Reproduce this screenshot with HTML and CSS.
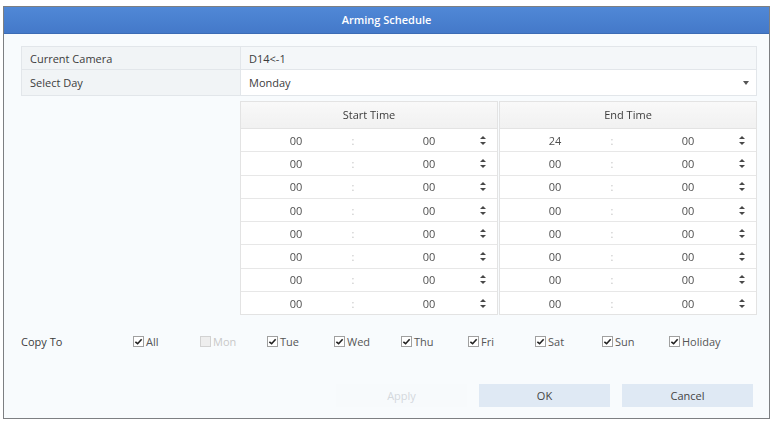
FILE: index.html
```html
<!DOCTYPE html>
<html lang="en">
<head>
  <meta charset="UTF-8">
  <title>Arming Schedule</title>
  <link rel="stylesheet" href="styles.css">
</head>
<body>
  <div class="dialog">
    <div class="dialog-title">Arming Schedule</div>

    <div class="dialog-body">
      <table class="info">
        <tr class="info-row">
          <td class="info-label">Current Camera</td>
          <td class="info-value">D14&lt;-1</td>
        </tr>
        <tr class="info-row select-row">
          <td class="info-label">Select Day</td>
          <td class="info-value">
            <div class="select">
              <span>Monday</span>
              <span class="caret"></span>
            </div>
          </td>
        </tr>
      </table>

      <div class="times">
        <div class="time-col" id="startCol">
          <div class="time-head">Start Time</div>
        </div>
        <div class="time-col" id="endCol">
          <div class="time-head">End Time</div>
        </div>
      </div>

      <div class="copy">
        <span class="copy-label">Copy To</span>
        <div class="copy-days" id="copyDays"></div>
      </div>

      <div class="actions">
        <button class="btn" disabled>Apply</button>
        <button class="btn">OK</button>
        <button class="btn">Cancel</button>
      </div>
    </div>
  </div>

  <script>
    // eight periods per day, only the first one ends at 24:00
    var periods = [
      ['00', '00', '24', '00'],
      ['00', '00', '00', '00'],
      ['00', '00', '00', '00'],
      ['00', '00', '00', '00'],
      ['00', '00', '00', '00'],
      ['00', '00', '00', '00'],
      ['00', '00', '00', '00'],
      ['00', '00', '00', '00']
    ];

    function timeRow(h, m) {
      return '<div class="time-row">' +
        '<span class="hour">' + h + '</span>' +
        '<span class="sep">:</span>' +
        '<span class="minute">' + m + '</span>' +
        '<span class="spin"><i class="up"></i><i class="down"></i></span>' +
        '</div>';
    }

    var startCol = document.getElementById('startCol');
    var endCol = document.getElementById('endCol');
    periods.forEach(function (p) {
      startCol.insertAdjacentHTML('beforeend', timeRow(p[0], p[1]));
      endCol.insertAdjacentHTML('beforeend', timeRow(p[2], p[3]));
    });

    // copy-to checkboxes, Mon is the current day so it is disabled
    var days = ['All', 'Mon', 'Tue', 'Wed', 'Thu', 'Fri', 'Sat', 'Sun', 'Holiday'];
    var copyDays = document.getElementById('copyDays');
    days.forEach(function (d) {
      var off = d === 'Mon';
      copyDays.insertAdjacentHTML('beforeend',
        '<label class="day' + (off ? ' disabled' : '') + '">' +
        '<span class="box">' + (off ? '' : '<svg viewBox="0 0 10 10" width="9" height="9"><path d="M1.5 5.5 L4 7.5 L8.5 2.5" fill="none" stroke="#222" stroke-width="1.8"/></svg>') + '</span>' +
        d + '</label>');
    });
  </script>
</body>
</html>
```

FILE: styles.css
```css
body {
  margin: 0;
  background: #ffffff;
  font-family: "Open Sans", "Noto Sans", sans-serif;
  font-size: 11px;
  color: #3c3c3c;
}

.dialog {
  margin: 6px 3px 0 3px;
  height: 411px;
  border: 1px solid #7d7f82;
  background: #f8fbfd;
  display: flex;
  flex-direction: column;
}

.dialog-title {
  height: 26px;
  line-height: 25px;
  text-align: center;
  color: #ffffff;
  font-weight: 600;
  background: linear-gradient(#5088d6, #4479c9);
  border-bottom: 1px solid #3c6cb5;
}

.dialog-body {
  padding: 12px 12px 0 17px;
}

/* camera / day table */
.info {
  width: 100%;
  border-collapse: collapse;
  border: 1px solid #e2e6ea;
}

.info td {
  border: 1px solid #e2e6ea;
  padding: 0 8px;
}

.info-row {
  height: 23px;
}

.select-row {
  height: 26px;
}

.info-label {
  width: 202px;
  background: #f1f4f6;
}

.info-value {
  background: #f4f7f9;
}

.select-row .info-value {
  background: #ffffff;
}

.select {
  display: flex;
  justify-content: space-between;
  align-items: center;
}

.caret {
  width: 0;
  height: 0;
  border-left: 3px solid transparent;
  border-right: 3px solid transparent;
  border-top: 4px solid #555;
  margin-right: -1px;
}

/* start / end time grid */
.times {
  display: flex;
  gap: 1px;
  margin: 5px 0 0 219px;
}

.time-col {
  flex: 1;
  border: 1px solid #e0e4e8;
  background: #ffffff;
  filter: grayscale(1);
}

.time-head {
  height: 26px;
  line-height: 26px;
  text-align: center;
  background: linear-gradient(#f6f9fb, #edf2f6);
  border-bottom: 1px solid #e0e4e8;
}

.time-row {
  height: 22.3px;
  display: grid;
  grid-template-columns: 110px 4px 34px 80px 1fr;
  align-items: center;
  border-bottom: 1px solid #e4e7ea;
  color: #505050;
}

.time-row:last-child {
  border-bottom: none;
}

.hour {
  text-align: center;
}

.sep {
  text-align: center;
  color: #c4c4c4;
}

.minute {
  grid-column: 4;
  text-align: center;
}

.spin {
  display: flex;
  flex-direction: column;
  align-items: center;
  gap: 3px;
}

.spin i {
  width: 0;
  height: 0;
  border-left: 3px solid transparent;
  border-right: 3px solid transparent;
}

.spin .up {
  border-bottom: 3px solid #484848;
}

.spin .down {
  border-top: 3px solid #484848;
}

/* copy to row */
.copy {
  display: flex;
  align-items: center;
  height: 20px;
  margin-top: 16px;
}

.copy-label {
  width: 112px;
}

.copy-days {
  display: grid;
  grid-template-columns: repeat(9, 67px);
}

.day {
  display: flex;
  align-items: center;
  gap: 2px;
  color: #555;
}

.day.disabled {
  color: #c8c8c8;
}

.box {
  width: 9px;
  height: 9px;
  border: 1px solid #a0a0a0;
  background: #ffffff;
  display: flex;
  align-items: flex-end;
}

.day.disabled .box {
  border-color: #d2d2d2;
  background: #eeeeee;
}

/* bottom buttons */
.actions {
  display: flex;
  justify-content: flex-end;
  gap: 12px;
  margin-top: 33px;
  padding-right: 4px;
}

.btn {
  width: 131px;
  height: 23px;
  border: none;
  background: #dfe9f4;
  color: #444;
  font-family: inherit;
  font-size: 11px;
}

.btn:disabled {
  background: #f7fafc;
  color: #d4d8dc;
}
```
